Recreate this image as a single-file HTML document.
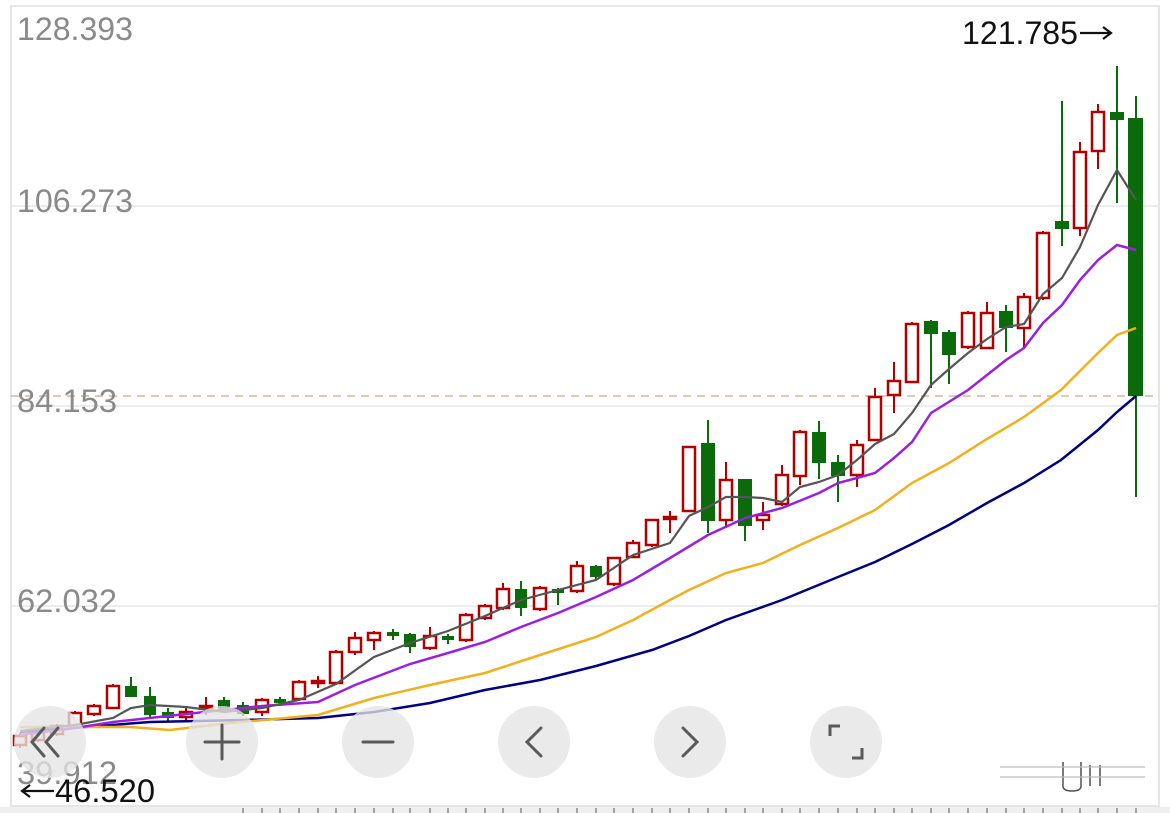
<!DOCTYPE html>
<html><head><meta charset="utf-8"><style>
html,body{margin:0;padding:0;background:#fff;width:1170px;height:813px;overflow:hidden}
svg{display:block}
.lab{font-family:"Liberation Sans",sans-serif;font-size:32px;fill:#8a8a8a}
.blk{font-family:"Liberation Sans",sans-serif;font-size:32px;fill:#111}
.r line,.g line{stroke-width:2}
.r line{stroke:#b00000}.g line{stroke:#0b6b0b}
.r rect{fill:#fff;stroke:#b00000;stroke-width:2.5}
.g rect{fill:#0b6b0b}
</style></head><body>
<svg width="1170" height="813" viewBox="0 0 1170 813">
<rect x="0" y="0" width="1170" height="813" fill="#fff"/>
<rect x="11" y="6" width="1148" height="800" fill="#fff" stroke="#e6e6e6" stroke-width="2"/>
<line x1="11" y1="206" x2="1158" y2="206" stroke="#e6e6e6" stroke-width="1.5"/>
<line x1="11" y1="406" x2="1158" y2="406" stroke="#e6e6e6" stroke-width="1.5"/>
<line x1="11" y1="606" x2="1158" y2="606" stroke="#e6e6e6" stroke-width="1.5"/>
<line x1="11" y1="396" x2="1158" y2="396" stroke="#c9a88a" stroke-width="1.3" stroke-dasharray="8,6"/>
<rect x="0" y="807" width="1170" height="6" fill="#efefef"/>
<g stroke="#888" stroke-width="1.5">
<line x1="243" y1="808" x2="243" y2="813"/><line x1="262" y1="808" x2="262" y2="813"/><line x1="280" y1="808" x2="280" y2="813"/><line x1="299" y1="808" x2="299" y2="813"/><line x1="318" y1="808" x2="318" y2="813"/><line x1="336" y1="808" x2="336" y2="813"/><line x1="355" y1="808" x2="355" y2="813"/><line x1="374" y1="808" x2="374" y2="813"/><line x1="393" y1="808" x2="393" y2="813"/><line x1="410" y1="808" x2="410" y2="813"/><line x1="430" y1="808" x2="430" y2="813"/><line x1="448" y1="808" x2="448" y2="813"/><line x1="466" y1="808" x2="466" y2="813"/><line x1="485" y1="808" x2="485" y2="813"/><line x1="503" y1="808" x2="503" y2="813"/><line x1="521" y1="808" x2="521" y2="813"/><line x1="540" y1="808" x2="540" y2="813"/><line x1="558" y1="808" x2="558" y2="813"/><line x1="577" y1="808" x2="577" y2="813"/><line x1="596" y1="808" x2="596" y2="813"/><line x1="614" y1="808" x2="614" y2="813"/><line x1="633" y1="808" x2="633" y2="813"/><line x1="652" y1="808" x2="652" y2="813"/><line x1="670" y1="808" x2="670" y2="813"/><line x1="689" y1="808" x2="689" y2="813"/><line x1="708" y1="808" x2="708" y2="813"/><line x1="726" y1="808" x2="726" y2="813"/><line x1="745" y1="808" x2="745" y2="813"/><line x1="763" y1="808" x2="763" y2="813"/><line x1="782" y1="808" x2="782" y2="813"/><line x1="800" y1="808" x2="800" y2="813"/><line x1="819" y1="808" x2="819" y2="813"/><line x1="838" y1="808" x2="838" y2="813"/><line x1="857" y1="808" x2="857" y2="813"/><line x1="875" y1="808" x2="875" y2="813"/><line x1="894" y1="808" x2="894" y2="813"/><line x1="912" y1="808" x2="912" y2="813"/><line x1="931" y1="808" x2="931" y2="813"/><line x1="949" y1="808" x2="949" y2="813"/><line x1="968" y1="808" x2="968" y2="813"/><line x1="987" y1="808" x2="987" y2="813"/><line x1="1006" y1="808" x2="1006" y2="813"/><line x1="1024" y1="808" x2="1024" y2="813"/><line x1="1043" y1="808" x2="1043" y2="813"/><line x1="1062" y1="808" x2="1062" y2="813"/><line x1="1080" y1="808" x2="1080" y2="813"/><line x1="1098" y1="808" x2="1098" y2="813"/><line x1="1117" y1="808" x2="1117" y2="813"/><line x1="1136" y1="808" x2="1136" y2="813"/>
</g>

<text class="lab" x="17" y="40" textLength="116" lengthAdjust="spacingAndGlyphs">128.393</text>
<text class="lab" x="17" y="212" textLength="116" lengthAdjust="spacingAndGlyphs">106.273</text>
<text class="lab" x="17" y="412" textLength="100" lengthAdjust="spacingAndGlyphs">84.153</text>
<text class="lab" x="17" y="612" textLength="100" lengthAdjust="spacingAndGlyphs">62.032</text>
<text class="lab" x="17" y="784" textLength="100" lengthAdjust="spacingAndGlyphs">39.912</text>

<!-- candles -->
<g class="r"><line x1="20" y1="733" x2="20" y2="748"/><rect x="14" y="736" width="12" height="9"/></g>
<g class="r"><line x1="38" y1="730" x2="38" y2="742"/><rect x="32" y="732" width="12" height="8"/></g>
<g class="r"><line x1="57" y1="724" x2="57" y2="736"/><rect x="51" y="726" width="12" height="8"/></g>
<g class="r"><line x1="75" y1="711" x2="75" y2="729"/><rect x="69" y="713" width="12" height="14"/></g>
<g class="r"><line x1="94" y1="704" x2="94" y2="716"/><rect x="88" y="706" width="12" height="8"/></g>
<g class="r"><line x1="113" y1="684" x2="113" y2="709"/><rect x="107" y="686" width="12" height="22"/></g>
<g class="g"><line x1="131" y1="677" x2="131" y2="697"/><rect x="125" y="686" width="12" height="11"/></g>
<g class="g"><line x1="150" y1="687" x2="150" y2="718"/><rect x="144" y="696" width="12" height="19"/></g>
<g class="g"><line x1="168" y1="708" x2="168" y2="722"/><rect x="162" y="712" width="12" height="6"/></g>
<g class="r"><line x1="186" y1="708" x2="186" y2="722"/><rect x="180" y="712" width="12" height="5"/></g>
<g class="r"><line x1="206" y1="697" x2="206" y2="715"/><rect x="200" y="706" width="12" height="2"/></g>
<g class="g"><line x1="224" y1="697" x2="224" y2="712"/><rect x="218" y="700" width="12" height="12"/></g>
<g class="g"><line x1="243" y1="702" x2="243" y2="716"/><rect x="237" y="705" width="12" height="9"/></g>
<g class="r"><line x1="262" y1="698" x2="262" y2="716"/><rect x="256" y="700" width="12" height="12"/></g>
<g class="g"><line x1="280" y1="697" x2="280" y2="705"/><rect x="274" y="699" width="12" height="4"/></g>
<g class="r"><line x1="299" y1="680" x2="299" y2="701"/><rect x="293" y="682" width="12" height="17"/></g>
<g class="r"><line x1="318" y1="676" x2="318" y2="688"/><rect x="312" y="681" width="12" height="2"/></g>
<g class="r"><line x1="336" y1="650" x2="336" y2="685"/><rect x="330" y="652" width="12" height="31"/></g>
<g class="r"><line x1="355" y1="632" x2="355" y2="655"/><rect x="349" y="638" width="12" height="14"/></g>
<g class="r"><line x1="374" y1="631" x2="374" y2="650"/><rect x="368" y="633" width="12" height="7"/></g>
<g class="g"><line x1="393" y1="629" x2="393" y2="640"/><rect x="387" y="632" width="12" height="4"/></g>
<g class="g"><line x1="410" y1="633" x2="410" y2="653"/><rect x="404" y="634" width="12" height="13"/></g>
<g class="r"><line x1="430" y1="627" x2="430" y2="650"/><rect x="424" y="636" width="12" height="12"/></g>
<g class="g"><line x1="448" y1="634" x2="448" y2="644"/><rect x="442" y="636" width="12" height="4"/></g>
<g class="r"><line x1="466" y1="613" x2="466" y2="642"/><rect x="460" y="615" width="12" height="25"/></g>
<g class="r"><line x1="485" y1="604" x2="485" y2="620"/><rect x="479" y="606" width="12" height="12"/></g>
<g class="r"><line x1="503" y1="583" x2="503" y2="610"/><rect x="497" y="589" width="12" height="19"/></g>
<g class="g"><line x1="521" y1="581" x2="521" y2="616"/><rect x="515" y="589" width="12" height="19"/></g>
<g class="r"><line x1="540" y1="586" x2="540" y2="611"/><rect x="534" y="588" width="12" height="21"/></g>
<g class="g"><line x1="558" y1="588" x2="558" y2="605"/><rect x="552" y="589" width="12" height="4"/></g>
<g class="r"><line x1="577" y1="561" x2="577" y2="593"/><rect x="571" y="566" width="12" height="25"/></g>
<g class="g"><line x1="596" y1="565" x2="596" y2="580"/><rect x="590" y="566" width="12" height="11"/></g>
<g class="r"><line x1="614" y1="557" x2="614" y2="586"/><rect x="608" y="558" width="12" height="26"/></g>
<g class="r"><line x1="633" y1="540" x2="633" y2="558"/><rect x="627" y="543" width="12" height="14"/></g>
<g class="r"><line x1="652" y1="519" x2="652" y2="547"/><rect x="646" y="520" width="12" height="25"/></g>
<g class="r"><line x1="670" y1="511" x2="670" y2="533"/><rect x="664" y="517" width="12" height="2"/></g>
<g class="r"><line x1="689" y1="446" x2="689" y2="512"/><rect x="683" y="447" width="12" height="64"/></g>
<g class="g"><line x1="708" y1="420" x2="708" y2="533"/><rect x="701" y="443" width="14" height="78"/></g>
<g class="r"><line x1="726" y1="462" x2="726" y2="528"/><rect x="720" y="480" width="12" height="40"/></g>
<g class="g"><line x1="745" y1="479" x2="745" y2="541"/><rect x="738" y="479" width="14" height="47"/></g>
<g class="r"><line x1="763" y1="502" x2="763" y2="530"/><rect x="757" y="515" width="12" height="5"/></g>
<g class="r"><line x1="782" y1="465" x2="782" y2="506"/><rect x="776" y="475" width="12" height="29"/></g>
<g class="r"><line x1="800" y1="430" x2="800" y2="485"/><rect x="794" y="432" width="12" height="44"/></g>
<g class="g"><line x1="819" y1="421" x2="819" y2="479"/><rect x="812" y="432" width="14" height="31"/></g>
<g class="g"><line x1="838" y1="455" x2="838" y2="502"/><rect x="831" y="462" width="14" height="14"/></g>
<g class="r"><line x1="857" y1="440" x2="857" y2="487"/><rect x="851" y="445" width="12" height="30"/></g>
<g class="r"><line x1="875" y1="388" x2="875" y2="441"/><rect x="869" y="397" width="12" height="43"/></g>
<g class="r"><line x1="894" y1="362" x2="894" y2="413"/><rect x="888" y="381" width="12" height="14"/></g>
<g class="r"><line x1="912" y1="322" x2="912" y2="383"/><rect x="906" y="324" width="12" height="58"/></g>
<g class="g"><line x1="931" y1="320" x2="931" y2="388"/><rect x="924" y="321" width="14" height="13"/></g>
<g class="g"><line x1="949" y1="330" x2="949" y2="384"/><rect x="942" y="332" width="14" height="23"/></g>
<g class="r"><line x1="968" y1="311" x2="968" y2="349"/><rect x="962" y="313" width="12" height="34"/></g>
<g class="r"><line x1="987" y1="302" x2="987" y2="349"/><rect x="981" y="313" width="12" height="35"/></g>
<g class="g"><line x1="1006" y1="305" x2="1006" y2="352"/><rect x="999" y="311" width="14" height="17"/></g>
<g class="r"><line x1="1024" y1="293" x2="1024" y2="348"/><rect x="1018" y="297" width="12" height="31"/></g>
<g class="r"><line x1="1043" y1="231" x2="1043" y2="300"/><rect x="1037" y="233" width="12" height="65"/></g>
<g class="g"><line x1="1062" y1="101" x2="1062" y2="246"/><rect x="1055" y="221" width="14" height="8"/></g>
<g class="r"><line x1="1080" y1="142" x2="1080" y2="236"/><rect x="1074" y="152" width="12" height="76"/></g>
<g class="r"><line x1="1098" y1="104" x2="1098" y2="169"/><rect x="1092" y="112" width="12" height="39"/></g>
<g class="g"><line x1="1117" y1="66" x2="1117" y2="203"/><rect x="1110" y="112" width="14" height="8"/></g>
<g class="g"><line x1="1136" y1="96" x2="1136" y2="497"/><rect x="1128" y="118" width="15" height="278"/></g>

<!-- MA lines -->
<polyline fill="none" stroke="#000080" stroke-width="2.5" points="20,732 150,722 243,720 318,718 374,712 430,703 485,690 540,680 596,666 652,650 689,636 726,620 782,600 838,577 875,562 912,544 949,525 987,503 1024,483 1061,460 1098,430 1117,412 1136,396"/>
<polyline fill="none" stroke="#f0b020" stroke-width="2.5" points="20,727 130,727 170,730 230,723 318,715 374,698 430,685 485,673 540,655 596,637 633,620 670,600 689,590 726,573 763,563 800,545 838,528 875,510 912,483 949,463 987,439 1024,417 1061,390 1098,353 1117,335 1136,328"/>
<polyline fill="none" stroke="#9a20e0" stroke-width="2.5" points="20,735 75,728 113,722 186,714 262,706 318,702 355,685 410,664 448,653 485,642 521,627 558,613 596,597 633,580 670,558 708,535 745,518 782,508 819,493 838,483 857,478 875,473 894,458 912,442 931,413 968,390 987,375 1006,360 1024,348 1043,323 1062,305 1080,280 1098,260 1117,245 1136,250"/>
<polyline fill="none" stroke="#555" stroke-width="2.2" points="20,731 75,725 113,718 131,708 150,705 186,707 224,712 262,708 299,700 336,684 374,657 410,643 448,631 485,616 521,600 558,590 596,580 633,555 670,543 689,516 708,507 726,497 745,497 763,498 782,502 800,487 819,482 838,475 857,460 875,444 894,434 912,413 931,385 949,369 968,353 987,339 1006,327 1024,324 1043,294 1062,278 1080,247 1098,205 1117,170 1136,200"/>

<!-- buttons -->
<g fill="rgba(228,228,228,0.78)">
<circle cx="50" cy="742" r="36"/><circle cx="222" cy="742" r="36"/><circle cx="378" cy="742" r="36"/><circle cx="534" cy="742" r="36"/><circle cx="690" cy="742" r="36"/><circle cx="846" cy="742" r="36"/>
</g>
<g fill="none" stroke="#5a5a5a" stroke-width="3" stroke-linecap="round">
<path d="M44 728 L32 742 L44 756 M58 728 L46 742 L58 756"/>
<path d="M205 742 H239 M222 725 V759"/>
<path d="M363 742 H393"/>
<path d="M541 728 L527 742 L541 756"/>
<path d="M683 728 L697 742 L683 756"/>
<path d="M830 736 V726 H840 M862 748 V758 H852" stroke-linecap="butt"/>
</g>

<text class="blk" x="962" y="44" textLength="116" lengthAdjust="spacingAndGlyphs">121.785</text>
<g stroke="#111" stroke-width="2.2" fill="none"><path d="M1080 33 H1111 M1103 27 L1111 33 L1103 39"/></g>
<text class="blk" x="55" y="802" font-size="33" textLength="100" lengthAdjust="spacingAndGlyphs">46.520</text>
<g stroke="#111" stroke-width="2.2" fill="none"><path d="M54 791 H22 M30 785 L22 791 L30 797"/></g>

<g stroke="#222" stroke-width="1.5" fill="none" opacity="0.8">
<path d="M1063 762 V786 Q1063 791 1072 791 Q1081 791 1081 786 V762"/>
<line x1="1090" y1="765" x2="1090" y2="786"/><line x1="1100" y1="765" x2="1100" y2="786"/>
</g>
<line x1="1000" y1="767" x2="1145" y2="767" stroke="#bbb" stroke-width="2" opacity="0.6"/>
<line x1="1000" y1="777" x2="1145" y2="777" stroke="#bbb" stroke-width="2" opacity="0.6"/>
</svg>
</body></html>
